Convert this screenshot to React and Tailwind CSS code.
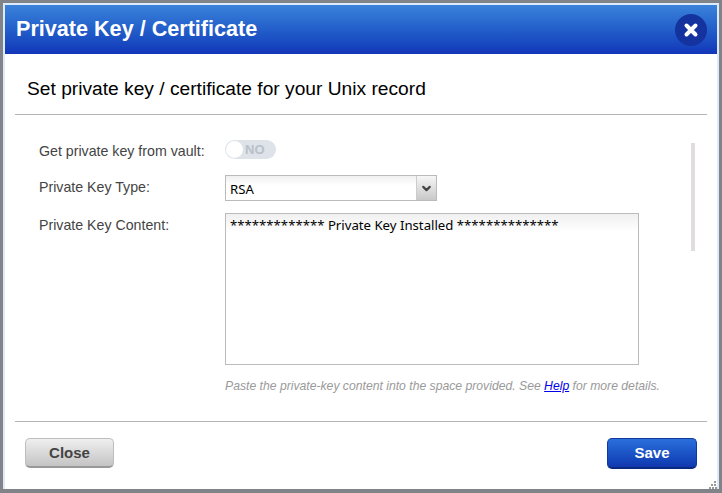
import { ChevronDown } from "lucide-react";

export default function App() {
    return (
        <div className="w-[722px] h-[493px] bg-[#808488] pt-[3px] pl-[3px] pr-[3px] pb-[4px] font-['Liberation_Sans',Arial,sans-serif]">
            <div className="relative h-full flex flex-col bg-white border-2 border-b-0 border-[#dceafb]">
                <div className="h-[49px] shrink-0 flex items-center justify-between pl-[11px] pr-[10px] bg-gradient-to-b from-[#3b82da] to-[#1436b9]">
                    <h1 className="text-[21.6px] font-bold text-white leading-none -mt-[2px]">Private Key / Certificate</h1>
                    <button className="w-8 h-8 rounded-full bg-[#14339f] flex items-center justify-center">
                        <svg width="16" height="16" viewBox="0 0 16 16">
                            <path d="M3.5 3.5 L12.5 12.5 M12.5 3.5 L3.5 12.5" stroke="#fff" strokeWidth="4" strokeLinecap="round" />
                        </svg>
                    </button>
                </div>

                <div className="mx-[10px] h-[61px] shrink-0 flex items-center pl-3 pt-[10px] border-b border-[#b4b4b4]">
                    <h2 className="text-[19.2px] leading-none text-black">Set private key / certificate for your Unix record</h2>
                </div>

                <div className="h-[306px] shrink-0 flex">
                    <div className="w-[686px] shrink-0 pl-[34px] pt-[24px]">
                        <div className="flex items-center h-5">
                            <label className="w-[186px] text-[14.2px] text-[#444] pt-[5px]">Get private key from vault:</label>
                            <div className="w-[51px] h-[19px] rounded-full bg-[#dde3e8] flex items-center pl-[1px]">
                                <span className="w-[17px] h-[17px] rounded-full bg-white" />
                                <span className="ml-[2px] text-[13px] font-bold text-[#b8c0c8] leading-none">NO</span>
                            </div>
                        </div>
                        <div className="flex items-center h-[26px] mt-[16px]">
                            <label className="w-[186px] text-[14.2px] text-[#444]">Private Key Type:</label>
                            <div className="w-[212px] h-[26px] flex border border-[#bbb] bg-gradient-to-b from-[#f0f0f0] to-white to-40%">
                                <span className="flex-1 pl-1 pt-[4px] font-['Noto_Sans',sans-serif] text-[13.2px] leading-[18px] text-black">RSA</span>
                                <span className="w-5 border-l border-[#ccc] flex items-center justify-center bg-gradient-to-b from-[#f6f6f6] to-[#c8c8c8]">
                                    <ChevronDown size={13} strokeWidth={4} className="text-[#444]" />
                                </span>
                            </div>
                        </div>
                        <div className="flex mt-[12px]">
                            <label className="w-[186px] text-[14.2px] text-[#444] pt-[2px]">Private Key Content:</label>
                            <div>
                                <div className="w-[414px] h-[152px] border border-[#bbb] bg-gradient-to-b from-[#f0f0f0] to-white to-[12%] pl-[4px] pr-[5px] py-[2px] font-['Noto_Sans',sans-serif] text-[13.2px] leading-[18px] text-black">
                                    ************* Private Key Installed **************
                                </div>
                                <p className="mt-[14px] text-[12.2px] italic text-[#9a9a9a] leading-[14px] whitespace-nowrap">
                                    Paste the private-key content into the space provided. See <a className="text-[#0000ee] underline">Help</a> for more details.
                                </p>
                            </div>
                        </div>
                    </div>
                    <div className="w-1 h-[108px] mt-[28px] bg-[#e0dedc]" />
                </div>

                <div className="mx-[10px] pt-[16px] flex items-start justify-between border-t border-[#b4b4b4] pl-[10px] pr-[10px]">
                    <button className="w-[89px] h-[30px] rounded-[5px] border border-[#bdbdbd] border-b-2 border-b-[#999] bg-gradient-to-b from-[#efefef] to-[#c4c4c4] text-[15px] font-bold text-[#444] pt-[1px]">Close</button>
                    <button className="w-[90px] h-[31px] rounded-[5px] border border-[#0f3a9c] border-b-2 border-b-[#0a2a80] bg-gradient-to-b from-[#2a6fdc] to-[#1138b0] text-[15px] font-bold text-white pt-[1px]">Save</button>
                </div>

                {/* resize grip */}
                <svg className="absolute right-0 bottom-0" width="8" height="8" viewBox="0 0 8 8">
                    <rect x="5" y="0" width="2" height="2" fill="#999" />
                    <rect x="2" y="3" width="2" height="2" fill="#999" />
                    <rect x="5" y="3" width="2" height="2" fill="#999" />
                    <rect x="0" y="6" width="2" height="2" fill="#999" />
                    <rect x="3" y="6" width="2" height="2" fill="#999" />
                    <rect x="6" y="6" width="2" height="2" fill="#999" />
                </svg>
            </div>
        </div>
    );
}
